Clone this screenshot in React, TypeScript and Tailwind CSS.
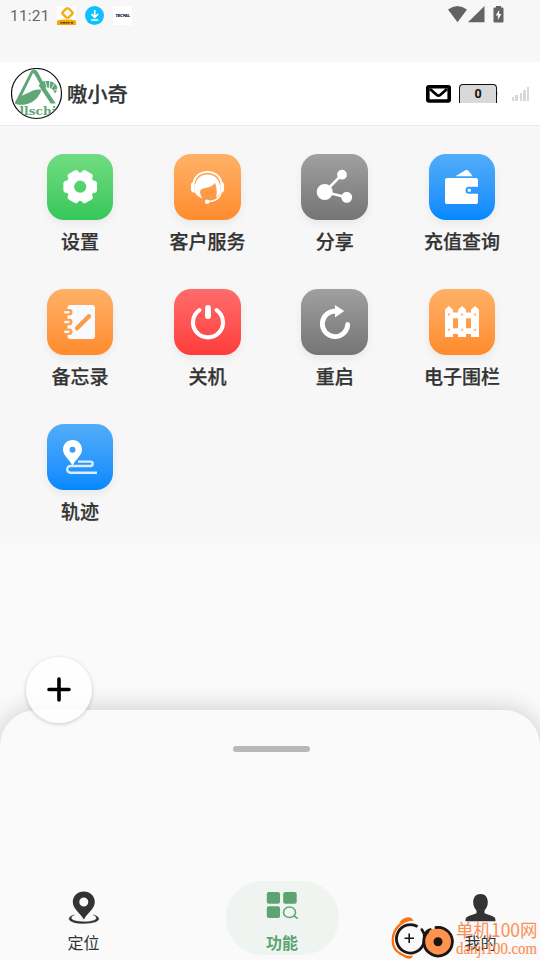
import React, { useState } from 'react'

const ICONS: Record<string, React.ReactNode> = {
  settings: (
    <g>
      <circle cx="33.2" cy="32.7" r="10.2" fill="none" stroke="#fff" strokeWidth="8.2" />
      {[0, 60, 120, 180, 240, 300].map((a) => (
        <rect key={a} x="41" y="26.7" width="9" height="12" rx="2.8" fill="#fff" transform={`rotate(${a} 33.2 32.7)`} />
      ))}
    </g>
  ),
  service: (
    <g>
      <path d="M19.8 28a13.8 11.5 0 0 1 27.4 0" fill="none" stroke="#fff" strokeWidth="1.8" />
      <path d="M20.7 27.5v11.2c-2.6 0-3.8-1.2-3.8-3.2v-4.2c0-2 1.2-3.8 3.8-3.8zM46.3 27.5v11.2c2.6 0 3.8-1.2 3.8-3.2v-4.2c0-2-1.2-3.8-3.8-3.8z" fill="#fff" />
      <path d="M20.7 37.5C20 27 25.2 20.5 33.5 20.5S47 27 46.3 37.5c-.4 2.8-2 4.8-4.2 6 1-4.2 1-9.8-1.2-14.7-2.7 4.5-8.2 4.7-13.1 6.1-2.8.8-1.7 6.2.7 9.5-4.1-1.4-7-3.4-7.8-6.9z" fill="#fff" />
      <path d="M47.3 38.2c-1.7 6.3-6.3 9.4-13.8 9.4" fill="none" stroke="#fff" strokeWidth="1.5" />
      <circle cx="33.2" cy="47.8" r="2.3" fill="#fff" />
    </g>
  ),
  share: (
    <g fill="#fff" stroke="#fff" strokeWidth="2.6">
      <path d="M23.7 38 41 20.7M23.7 38l22 5.3" />
      <circle cx="23.7" cy="38" r="6.7" />
      <circle cx="41" cy="20.7" r="3.6" />
      <circle cx="45.7" cy="43.3" r="4.2" />
    </g>
  ),
  wallet: (
    <g fill="#fff">
      <path d="M26.3 22.2 36 16.6c1.6-.9 3-.5 4 1l3.7 4.6z" />
      <path d="M18.2 24h28.6c1.4 0 2.2.9 2.2 2.2v6.5h-9a3.5 3.5 0 0 0 0 7h9v8c0 1.4-.8 2.3-2.2 2.3H18.2c-1.4 0-2.2-.9-2.2-2.3V26.2c0-1.3.8-2.2 2.2-2.2z" />
      <circle cx="40.3" cy="36.2" r="1.7" />
    </g>
  ),
  memo: (
    <g>
      <rect x="20.4" y="16" width="27.6" height="34" rx="3" fill="#f7faff" />
      {[23.3, 33, 42.8].map((y) => (
        <g key={y}>
          <path d={`M18 ${y - 2}h4.2a2 2 0 0 1 0 4H18`} fill="none" stroke="#ff9f4a" strokeWidth="2.6" />
          <path d={`M17.3 ${y}h4.6`} stroke="#f7faff" strokeWidth="2.4" />
        </g>
      ))}
      <path d="m30 39.3 11.9-12" stroke="#ff9b42" strokeWidth="4.4" strokeLinecap="round" />
    </g>
  ),
  power: (
    <g fill="none" stroke="#fff" strokeLinecap="round">
      <path d="M25.4 21.1a15 15 0 1 0 17.2 0" strokeWidth="4.1" />
      <path d="M34 18.9v8.2" strokeWidth="5.8" />
    </g>
  ),
  restart: (
    <g>
      <path d="M46.7 35.3A12.7 12.7 0 1 1 34.8 22.2" fill="none" stroke="#fff" strokeWidth="4.8" strokeLinecap="round" />
      <path d="m34 16 9.2 5.9-9.2 6.6z" fill="#fff" />
    </g>
  ),
  fence: (
    <g>
      <path d="M16 48V20.5l3.8-3.5 4.2 3.8v2.8h5v-2.8l4-3.8 4 3.8v2.8h5v-2.8l4-3.8 4 3.5V48h-8v-3h-5v3h-8v-3h-5v3zM24 29.3v10h5v-10zM37 29.3v10h5v-10z" fill="#fff" fillRule="evenodd" />
      {[20, 33, 46].map((x) => (
        <g key={x} fill="#ff9b42" opacity="0.65">
          <circle cx={x} cy="25.5" r="1.2" />
          <circle cx={x} cy="40.8" r="1.2" />
        </g>
      ))}
    </g>
  ),
  track: (
    <g>
      <path d="M25.5 16c5.5 0 9.5 4.2 9.5 9.6 0 6-5.5 9-9.5 15.9C21.5 34.6 16 31.6 16 25.6 16 20.2 20 16 25.5 16zm0 6.8a3 3 0 1 0 0 6 3 3 0 0 0 0-6z" fill="#fff" />
      <path d="M31 37.6H43.5a2.2 2.2 0 0 1 0 4.4H23.5a3.3 3.3 0 0 0 0 6.7H50" fill="none" stroke="#d9edff" strokeWidth="2.4" />
    </g>
  ),
}

const green = 'from-[#70dc82] to-[#34c759]'
const orange = 'from-[#ffb166] to-[#ff8b2b]'
const gray = 'from-[#a0a0a0] to-[#757575]'
const blue = 'from-[#50adf8] to-[#0088ff]'
const red = 'from-[#ff6b6b] to-[#ff3b3b]'

const actions = [
  { label: '设置', icon: 'settings', color: green },
  { label: '客户服务', icon: 'service', color: orange },
  { label: '分享', icon: 'share', color: gray },
  { label: '充值查询', icon: 'wallet', color: blue },
  { label: '备忘录', icon: 'memo', color: orange },
  { label: '关机', icon: 'power', color: red },
  { label: '重启', icon: 'restart', color: gray },
  { label: '电子围栏', icon: 'fence', color: orange },
  { label: '轨迹', icon: 'track', color: blue },
]

function StatusBar() {
  return (
    <div className="flex h-[62px] items-start justify-between pl-2.5 pr-[35px] pt-1.5 text-[#666]">
      <div className="flex items-center">
        <span className="h-[19px] w-[47px] font-['Roboto'] text-[15.5px] leading-[21px] tracking-[0.2px]">11:21</span>
        <svg width="19" height="19" viewBox="0 0 19 19">
          <path d="M0 0h19v19H0z" fill="#fff" />
          <path d="M0 14.5q9.5-2 19 0V19H0z" fill="#f5a800" />
          <path d="M9.5 2.3 5.5 6.5v1.2l4 4M11.5 2.3l4 4.2v1.2l-4 4" fill="none" stroke="#f7ae17" strokeWidth="2.5" />
          <path d="M9 2.2h3M9 11.8h3" stroke="#f7ae17" strokeWidth="2" />
          <path d="M3.5 16.8h9M14 16.8h2" stroke="#4c3b12" strokeWidth="1.5" strokeDasharray="2 .5" />
        </svg>
        <svg className="ml-[9px]" width="19" height="19" viewBox="0 0 19 19">
          <circle cx="9.5" cy="9.5" r="9.5" fill="#0fc0fa" />
          <path d="M9.7 4v7M6.5 8.2l3.2 3.2L13 8.2M6.2 14h7" fill="none" stroke="#fff" strokeWidth="1.7" />
        </svg>
        <svg className="ml-[9px]" width="19" height="19" viewBox="0 0 19 19">
          <path d="M0 0h19v19H0z" fill="#fff" />
          <text x="2.5" y="11" fontFamily="Liberation Sans" fontSize="3.8" fontWeight="bold" fontStyle="italic" fill="#10244f" stroke="#10244f" strokeWidth=".2" textLength="14.5" lengthAdjust="spacingAndGlyphs">TECPAL</text>
        </svg>
      </div>
      <div className="flex items-center">
        <svg width="19" height="17" viewBox="0 0 19 17"><path d="M0 3.5Q9.5-3.5 19 3.5L9.5 16.3z" fill="#636363" /></svg>
        <svg className="ml-[1px]" width="17" height="17" viewBox="0 0 17 17"><path d="M16.5 0v16.3H0z" fill="#636363" /></svg>
        <svg className="ml-[8px] mr-[1px]" width="11" height="17" viewBox="0 0 11 17">
          <path d="M3 0h5v1.5h1.5q1 0 1 1v13q0 1-1 1h-8q-1 0-1-1v-13q0-1 1-1H3z" fill="#636363" />
          <path d="M6.2 4 2.7 9.5h2.2V14l3.5-6H6.2z" fill="#f7f7f7" />
        </svg>
      </div>
    </div>
  )
}

function Logo() {
  return (
    <svg width="52" height="52" viewBox="0 0 52 52">
      <defs><clipPath id="avatar"><circle cx="25.5" cy="25.5" r="24.8" /></clipPath></defs>
      <circle cx="25.5" cy="25.5" r="25" fill="#fff" stroke="#111" strokeWidth="1.2" />
      <g clipPath="url(#avatar)" fill="#5fa777">
        <path d="M4 34.5 18.8 5.2C20 2.7 21 1.8 23 1.8s3.2 1.2 4.3 3.2l5 9.5-3 2-6-10.5c-.6-1-1.4-.8-1.9.3L9.5 30.5z" />
        <path d="M3.8 35.4C6 29.5 12 27 18 24.5c4.5-2.3 7.5-3.7 12.5-2.7C28 30 22 35.5 13 36.7c-3.5.4-6.7.1-9.2-1.3z" />
        <path d="m29 19.5 3.5-2.5 12.2 18.5h-5z" />
        <path d="M27.5 17.8c1.8-3 4.5-5.2 7.7-4.7 5.3-.6 9.8 2 10.8 5.7.6 2.5-.7 6-2.4 6.5-.8-3.5-3.6-5.7-7.9-5.8-3.2 1.1-5.9.3-8.2-1.7z" />
        <path d="M34 12.5l2 7.5M38.8 12.5l-.5 7.8M43.5 15.5l-3 5M47 21l-4.5 1.5" stroke="#fff" strokeWidth=".8" />
        <text x="8.5" y="47.3" fontFamily="DejaVu Serif" fontSize="11" fontWeight="bold" textLength="37" lengthAdjust="spacingAndGlyphs">llschi</text>
      </g>
    </svg>
  )
}

function Header() {
  return (
    <header className="flex h-16 items-center border-b border-[#ebebeb] bg-white px-[11px]">
      <Logo />
      <h1 className="ml-1 flex-1 pb-0.5 text-[20.3px] font-medium leading-8 text-[#333] [-webkit-text-stroke:0.25px_#333]">嗷小奇</h1>
      <svg width="25" height="18" viewBox="0 0 25 18">
        <rect x="1.8" y="1.8" width="21.4" height="14.2" rx="1" fill="#fff" stroke="#000" strokeWidth="3.6" strokeLinejoin="round" />
        <path d="m4 4 6.8 6q1.7 1.3 3.4 0l6.8-6" fill="none" stroke="#000" strokeWidth="2.8" />
      </svg>
      <div className="ml-2 flex items-center">
        <div className="flex h-[19px] w-[38px] items-center justify-center rounded-t-[4px] border border-b-0 border-[#111] bg-[#d8d8d8] font-['Roboto'] text-[12.5px] font-bold text-[#111]">0</div>
        <div className="h-[3px] w-[1px] bg-[#ccc]" />
      </div>
      <div className="ml-3.5 flex h-[15px] w-[17px] items-end justify-between pt-[1px]">
        <i className="h-1 w-[2px] bg-[#d8d8d8]" />
        <i className="h-1.5 w-[3px] bg-[#d8d8d8]" />
        <i className="h-2 w-[2px] bg-[#d8d8d8]" />
        <i className="h-[11px] w-[3px] bg-[#d8d8d8]" />
        <i className="h-3.5 w-[2px] bg-[#d8d8d8]" />
      </div>
    </header>
  )
}

function Watermark() {
  return (
    <svg className="pointer-events-none absolute bottom-0 right-0" width="150" height="46" viewBox="0 0 150 46">
      <path d="M21 5.5C12 7 3.5 14 2.8 25s6 14.5 14 18" fill="none" stroke="#ff6f0f" strokeWidth="2.3" />
      <path d="M9 9c4-6 12-8 14.5-2.2C18 6.5 14 8 9 9zM11 40c4 1 7 2.5 12 1.5-1.5 5-7 4-12-1.5z" fill="#ff6f0f" />
      <path d="M27.5 12.5A14 14.2 0 1 0 33.5 30" fill="none" stroke="#1b1514" strokeWidth="2.8" />
      <path d="M31.8 15.5 34 19.5q1.2 5.5-.5 10M35 20q1.5-3.5 5.5-4.5" fill="none" stroke="#1b1514" strokeWidth="2.6" strokeLinecap="round" />
      <path d="M14.5 24.3h9.5M19.2 19.5v9.5" stroke="#1b1514" strokeWidth="1.6" />
      <circle cx="48" cy="27.7" r="13.8" fill="#ff924d" />
      <path d="M46 13.5A14.3 14.3 0 1 1 38 17.5" fill="none" stroke="#1b1514" strokeWidth="2.8" strokeLinecap="round" />
      <circle cx="48" cy="27.7" r="4.5" fill="#1b1514" />
      <g fill="#ff8440" opacity="0.9">
        <text x="66" y="23.3" fontFamily="Noto Sans CJK SC, sans-serif" fontSize="18.5" textLength="81.5" lengthAdjust="spacingAndGlyphs">单机100网</text>
        <text x="66" y="39.7" fontFamily="Liberation Serif, serif" fontSize="16" stroke="#ff8440" strokeWidth=".2" textLength="81" lengthAdjust="spacingAndGlyphs">danji100.com</text>
      </g>
    </svg>
  )
}

const tabs = [
  {
    label: '定位',
    icon: (
      <>
        <path d="M16.8.5c6.2 0 11 4.6 11 10.5 0 6.500-6.500 10-11 17.500C12.300 21 5.800 17.500 5.800 11 5.800 5.100 10.600.5 16.800.5zm0 6a4.500 4.500 0 1 0 0 9 4.500 4.500 0 0 0 0-9z" />
        <path d="M7.5 23.7C-1.5 26 0 32.5 17 32.5s18.5-6.5 9-8.8c6.5 3 3.5 7-9 7s-16-4-9.5-7z" stroke="currentColor" strokeWidth=".3" />
      </>
    ),
  },
  {
    label: '功能',
    icon: (
      <>
        <rect x="1.8" y="1" width="13.2" height="11.8" rx="2" />
        <rect x="18.2" y="1" width="13.5" height="11.8" rx="2" />
        <rect x="1.8" y="15.2" width="13.2" height="11.8" rx="2" />
        <ellipse cx="24.5" cy="21.2" rx="6" ry="5.3" fill="none" stroke="currentColor" strokeWidth="1.5" />
        <path d="m28.7 24.7 4 3" fill="none" stroke="currentColor" strokeWidth="1.6" />
      </>
    ),
  },
  {
    label: '我的',
    icon: <path d="M16.5 3c4.7 0 7.3 3.3 7.3 8.3 0 4-1.6 6.2-3.3 8.3v2.6c3 1.4 8.5 2.6 10.2 4.3.6.9.8 1.900.8 3.700h-30c0-1.800.2-2.800.8-3.700C4 24.800 9.500 23.600 12.500 22.200v-2.600c-1.700-2.100-3.300-4.300-3.300-8.300C9.200 6.300 11.800 3 16.500 3z" />,
  },
]

export default function App() {
  const [activeTab, setActiveTab] = useState('功能')

  return (
    <div className="relative flex h-[960px] w-[540px] flex-col overflow-hidden bg-[#fafafa] font-['Noto_Sans_CJK_SC',sans-serif]">
      <div className="h-[543px] bg-[#f7f7f7]">
        <StatusBar />
        <Header />
        <main className="grid grid-cols-4 gap-y-[34px] pl-[16.4px] pr-[14.3px] pt-7">
          {actions.map((a) => (
            <button key={a.label} className="flex h-[101px] flex-col items-center">
              <span className={`h-[66px] w-[66.5px] shrink-0 rounded-[17px] bg-gradient-to-b shadow-[0_4px_8px_rgba(0,0,0,0.06)] ${a.color}`}>
                <svg width="66" height="66" viewBox="0 0 66 66">{ICONS[a.icon]}</svg>
              </span>
              <span className="mt-[7px] whitespace-nowrap text-[19px] font-medium leading-7 text-[#333] [-webkit-text-stroke:0.25px_#333]">{a.label}</span>
            </button>
          ))}
        </main>
      </div>

      {/* bottom sheet with tab bar */}
      <section className="mt-auto flex h-[250px] flex-col rounded-t-[36px] bg-[#fafafa] shadow-[0_0_26px_rgba(0,0,0,0.2)]">
        <div className="ml-[233px] mt-9 h-1.5 w-[77px] rounded-full bg-[#b8b8b8]" />
        <nav className="mb-[5px] mt-auto flex justify-between pl-[27px] pr-[3px]">
          {tabs.map((t) => (
            <button
              key={t.label}
              onClick={() => setActiveTab(t.label)}
              className={`flex h-[74px] w-[113px] flex-col items-center rounded-full pt-2.5 ${activeTab === t.label ? 'bg-[#eff4f1] font-bold text-[#5ca572]' : 'text-[#333]'}`}
            >
              <svg width="34" height="34" viewBox="0 0 34 34" fill="currentColor">{t.icon}</svg>
              <span className="mt-[5px] text-[16px] leading-6">{t.label}</span>
            </button>
          ))}
        </nav>
      </section>

      {/* floating add button */}
      <button className="absolute left-[26px] top-[657px] flex h-[66px] w-[66px] items-center justify-center rounded-full bg-white/85 pb-[1px] pr-[1px] shadow-[0_1px_4px_rgba(0,0,0,0.2)]">
        <svg width="24" height="25" viewBox="0 0 24 25"><path d="M2 12.5h20M12 2v21" stroke="#000" strokeWidth="3.6" strokeLinecap="round" /></svg>
      </button>
      <Watermark />
    </div>
  )
}
